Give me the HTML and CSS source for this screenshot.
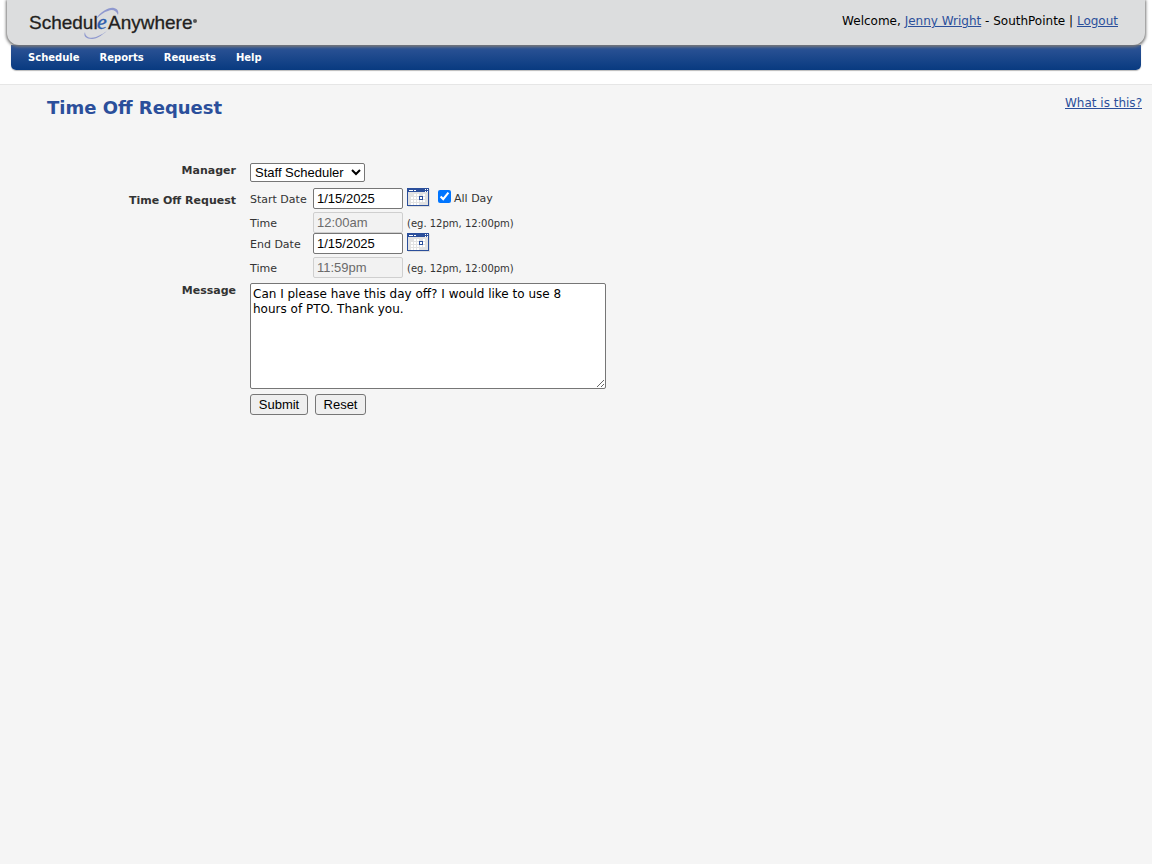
FILE: index.html
```html
<!DOCTYPE html>
<html lang="en">
<head>
<meta charset="utf-8">
<title>Time Off Request - ScheduleAnywhere</title>
<link rel="stylesheet" href="styles.css">
</head>
<body>
<header class="site-header">
  <div class="banner">
    <svg class="logo" width="172" height="36" viewBox="0 0 172 36" role="img" aria-label="ScheduleAnywhere">
      <path d="M68 13C73 5 81 1 86 2C90 3 91 6 90 9C88 4 84 3 80 5C76 6 72 9 68 13Z" fill="#8f98cf"/>
      <path d="M57 26C57 31 62 33 68 31C73 29 78 26 81 23C76 28 69 33 64 33C58 33 55 30 57 26Z" fill="#8f98cf"/>
      <text class="logo-word" x="1" y="23">Schedul</text>
      <text class="logo-e" x="69" y="23">e</text>
      <text class="logo-word" x="80" y="23">Anywhere</text>
      <circle cx="167" cy="15" r="2" fill="#555"/>
    </svg>
    <p class="account">Welcome, <a href="#">Jenny Wright</a> - SouthPointe | <a href="#">Logout</a></p>
  </div>
  <nav class="menu">
    <a href="#">Schedule</a>
    <a href="#">Reports</a>
    <a href="#">Requests</a>
    <a href="#">Help</a>
  </nav>
</header>
<main class="content">
  <div class="title-row">
    <h1>Time Off Request</h1>
    <a class="help" href="#">What is this?</a>
  </div>
  <form class="request">
    <label class="caption" for="manager">Manager</label>
    <div class="field"><select id="manager"><option>Staff Scheduler</option></select></div>

    <span class="caption caption-dates" id="dates">Time Off Request</span>
    <div class="dates" role="group" aria-labelledby="dates">
      <div class="line">
        <label class="sub" for="start">Start Date</label>
        <input class="box" id="start" type="text" value="1/15/2025">
        <button class="picker" type="button" aria-label="Pick start date">
          <svg width="23" height="19" viewBox="0 0 23 19" shape-rendering="crispEdges"><path d="M1 1h22v18H1z" fill="#ddd"/><path d="M0 0h22v18H0z" fill="#2b4f9b"/><path d="M1 4h20v13H1z" fill="#e2e2e2"/><path d="M2 2h4v1H2zM7 2h2v1H7zM18 1h1v1h-1zM20 1h1v1h-1zM18 3h1v1h-1zM20 3h1v1h-1z" fill="#fff"/><path d="M7 6h2v2H7zM10 6h2v2h-2zM16 6h2v2h-2zM4 9h2v2H4zM7 9h2v2H7zM10 9h2v2h-2zM16 9h2v2h-2zM4 12h2v2H4zM7 12h2v2H7zM10 12h2v2h-2zM13 12h2v2h-2zM16 12h2v2h-2zM4 15h2v2H4zM7 15h2v2H7zM10 15h2v2h-2z" fill="#fff"/><path d="M12 8h4v4h-4z" fill="#2b4f9b"/><path d="M13 9h2v2h-2z" fill="#fff"/></svg>
        </button>
        <label class="all-day"><input type="checkbox" checked>All Day</label>
      </div>
      <div class="line">
        <label class="sub" for="start-time">Time</label>
        <input class="box" id="start-time" type="text" value="12:00am" disabled>
        <span class="hint">(eg. 12pm, 12:00pm)</span>
      </div>
      <div class="line">
        <label class="sub" for="end">End Date</label>
        <input class="box" id="end" type="text" value="1/15/2025">
        <button class="picker" type="button" aria-label="Pick end date">
          <svg width="23" height="19" viewBox="0 0 23 19" shape-rendering="crispEdges"><path d="M1 1h22v18H1z" fill="#ddd"/><path d="M0 0h22v18H0z" fill="#2b4f9b"/><path d="M1 4h20v13H1z" fill="#e2e2e2"/><path d="M2 2h4v1H2zM7 2h2v1H7zM18 1h1v1h-1zM20 1h1v1h-1zM18 3h1v1h-1zM20 3h1v1h-1z" fill="#fff"/><path d="M7 6h2v2H7zM10 6h2v2h-2zM16 6h2v2h-2zM4 9h2v2H4zM7 9h2v2H7zM10 9h2v2h-2zM16 9h2v2h-2zM4 12h2v2H4zM7 12h2v2H7zM10 12h2v2h-2zM13 12h2v2h-2zM16 12h2v2h-2zM4 15h2v2H4zM7 15h2v2H7zM10 15h2v2h-2z" fill="#fff"/><path d="M12 8h4v4h-4z" fill="#2b4f9b"/><path d="M13 9h2v2h-2z" fill="#fff"/></svg>
        </button>
      </div>
      <div class="line">
        <label class="sub" for="end-time">Time</label>
        <input class="box" id="end-time" type="text" value="11:59pm" disabled>
        <span class="hint">(eg. 12pm, 12:00pm)</span>
      </div>
    </div>

    <label class="caption" for="message">Message</label>
    <div class="field"><textarea id="message" rows="7">Can I please have this day off? I would like to use 8 hours of PTO. Thank you.</textarea></div>

    <div class="actions">
      <button class="push" type="submit">Submit</button>
      <button class="push" type="reset">Reset</button>
    </div>
  </form>
</main>
</body>
</html>
```
FILE: styles.css
```css
* {
  box-sizing: border-box;
}

body {
  margin: 0;
  min-height: 100vh;
  display: flex;
  flex-direction: column;
  background: #f5f5f5;
  color: #333;
  font-family: Verdana, "DejaVu Sans", sans-serif;
  font-size: 12px;
}

a {
  color: #2b4f9b;
}

.site-header {
  padding: 0 7px 14px;
  background: #fff;
  border-bottom: 1px solid #e6e6e6;
}

.banner {
  position: relative;
  display: flex;
  justify-content: space-between;
  height: 45px;
  padding: 6px 27px 0 21px;
  background: #dcddde;
  border-radius: 0 0 12px 12px;
  box-shadow: 0 1px 3px 1px #777;
}

.logo-word {
  font-family: "Liberation Sans", Arial, sans-serif;
  font-size: 19px;
  fill: #231f20;
  stroke: #231f20;
  stroke-width: 0.3;
}

.logo-e {
  font-family: "Liberation Serif", "Times New Roman", serif;
  font-size: 22px;
  font-style: italic;
  fill: #2d5cab;
  stroke: #2d5cab;
  stroke-width: 0.4;
}

.account {
  margin: 8px 0 0;
  line-height: 15px;
  color: #000;
}

.menu {
  display: flex;
  gap: 20px;
  margin: 0 4px;
  padding: 5px 17px;
  background: linear-gradient(#2f5597, #083a80);
  border-radius: 0 0 5px 5px;
  box-shadow: 0 1px 1px #bbb;
}

.menu a {
  color: #fff;
  font-size: 10px;
  font-weight: bold;
  line-height: 15px;
  text-decoration: none;
}

.content {
  flex: 1;
  padding: 11px 10px 40px 47px;
}

.title-row {
  display: flex;
  justify-content: space-between;
  align-items: flex-start;
}

h1 {
  margin: 0;
  color: #2b4f9b;
  font-size: 18px;
  line-height: 24px;
}

.help {
  line-height: 15px;
}

.request {
  display: grid;
  grid-template-columns: 189px minmax(0, 1fr);
  column-gap: 14px;
  row-gap: 6px;
  margin-top: 43px;
}

.caption {
  padding-top: 1px;
  font-size: 11px;
  font-weight: bold;
  line-height: 14px;
  text-align: right;
}

.caption-dates {
  padding-top: 6px;
}

.field {
  display: flex;
}

select {
  width: 115px;
  height: 19px;
  border: 1px solid #767676;
  border-radius: 2px;
  background: #fff;
  color: #000;
  font: 13px "Liberation Sans", Arial, sans-serif;
}

.dates {
  display: grid;
  grid-template-rows: 24px 21px 24px 20px;
}

.line {
  display: flex;
  align-items: flex-start;
}

.sub {
  width: 63px;
  padding-top: 5px;
  font-size: 11px;
  line-height: 14px;
}

.box {
  width: 90px;
  height: 21px;
  padding: 1px 3px;
  border: 1px solid #767676;
  border-radius: 2px;
  background: #fff;
  color: #000;
  font: 13px "Liberation Sans", Arial, sans-serif;
}

.box:disabled {
  border-color: #cfcfcf;
  background: #f2f2f2;
  color: #6b6b6b;
}

.picker {
  display: flex;
  margin-left: 4px;
  padding: 0;
  border: 0;
  background: none;
}

.all-day {
  display: flex;
  align-items: flex-start;
  gap: 3px;
  padding-top: 4px;
  margin-left: 8px;
  font-size: 11px;
  line-height: 14px;
}

.all-day input {
  width: 13px;
  height: 13px;
  margin: -2px 0 0;
}

.hint {
  padding: 5px 0 0 4px;
  font-size: 10px;
  line-height: 14px;
}

textarea {
  width: 356px;
  max-width: 100%;
  height: 106px;
  padding: 3px 16px 2px 2px;
  border: 1px solid #767676;
  border-radius: 2px;
  background: #fff;
  color: #000;
  font: 12px/15px Verdana, "DejaVu Sans", sans-serif;
}

.actions {
  grid-column: 2;
  display: flex;
  gap: 7px;
  margin-top: -1px;
}

.push {
  height: 21px;
  padding: 0 7px;
  border: 1px solid #767676;
  border-radius: 3px;
  background: #efefef;
  color: #000;
  min-width: 51px;
  font: 13px "Liberation Sans", Arial, sans-serif;
}

.push[type="submit"] {
  min-width: 58px;
}
```
